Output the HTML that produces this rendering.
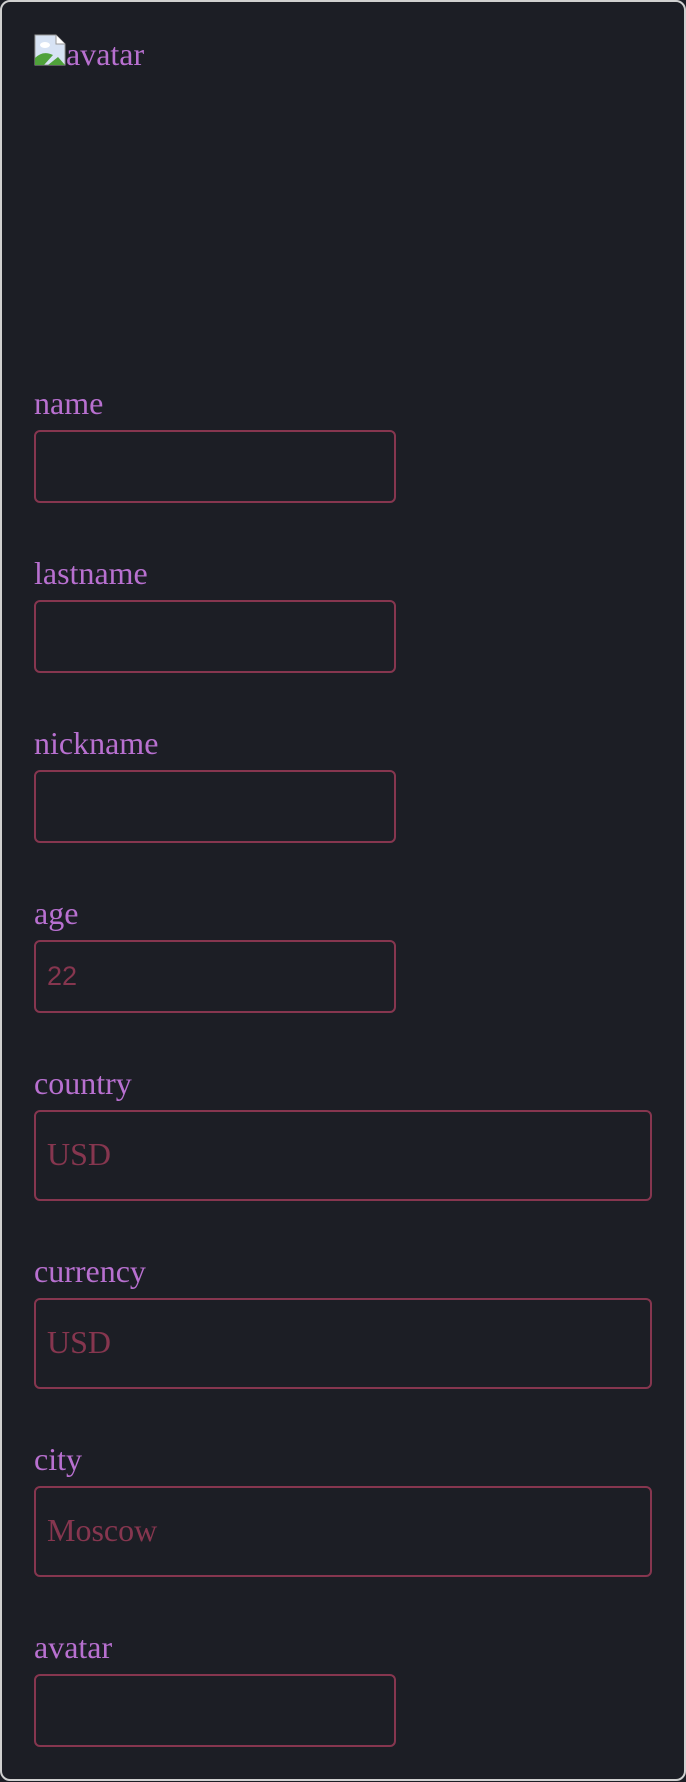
<!DOCTYPE html>
<html><head><meta charset="utf-8"><style>
html,body{margin:0;padding:0;background:#1c1e25;}
body{width:686px;height:1782px;position:relative;overflow:hidden;font-family:"Liberation Serif",serif;}
.frame{position:absolute;left:0;top:0;width:682px;height:1777px;border:2px solid #d0d0d0;border-radius:10px;background:#1c1e25;}
.lbl{position:absolute;left:34px;font-size:32px;line-height:32px;color:#b870d0;}
.in{position:absolute;left:34px;box-sizing:border-box;border:2px solid #86364f;border-radius:6px;display:flex;align-items:center;padding-left:11px;color:#86364f;}
.s{width:362px;height:73px;}
.w{width:618px;height:91px;font-size:32px;padding-bottom:2px;}
.img{position:absolute;left:34px;top:34px;display:flex;align-items:flex-end;font-size:32px;color:#b870d0;}
</style></head><body>
<div class="frame"></div>
<div class="img"><svg width="32" height="32" viewBox="0 0 32 32"><path d="M1 1h21l9 9v21H1z" fill="#d7e3f4" stroke="#999" stroke-width="1"/><path d="M22 1v9h9" fill="#fff" stroke="#999"/><ellipse cx="11" cy="11" rx="5" ry="3" fill="#fff"/><path d="M1 31V24q8-8 18-3l-9 10z" fill="#4fa23a"/><path d="M14 31l10-8 7 8z" fill="#4fa23a"/></svg><span style="line-height:24px">avatar</span></div>

<div class="lbl" style="top:387px">name</div>
<div class="in s" style="top:430px"></div>

<div class="lbl" style="top:557px">lastname</div>
<div class="in s" style="top:600px"></div>

<div class="lbl" style="top:727px">nickname</div>
<div class="in s" style="top:770px"></div>

<div class="lbl" style="top:897px">age</div>
<div class="in s" style="top:940px;font-family:'Liberation Sans',sans-serif;font-size:27px;">22</div>

<div class="lbl" style="top:1067px">country</div>
<div class="in w" style="top:1110px">USD</div>

<div class="lbl" style="top:1255px">currency</div>
<div class="in w" style="top:1298px">USD</div>

<div class="lbl" style="top:1443px">city</div>
<div class="in w" style="top:1486px">Moscow</div>

<div class="lbl" style="top:1631px">avatar</div>
<div class="in s" style="top:1674px"></div>
</body></html>
